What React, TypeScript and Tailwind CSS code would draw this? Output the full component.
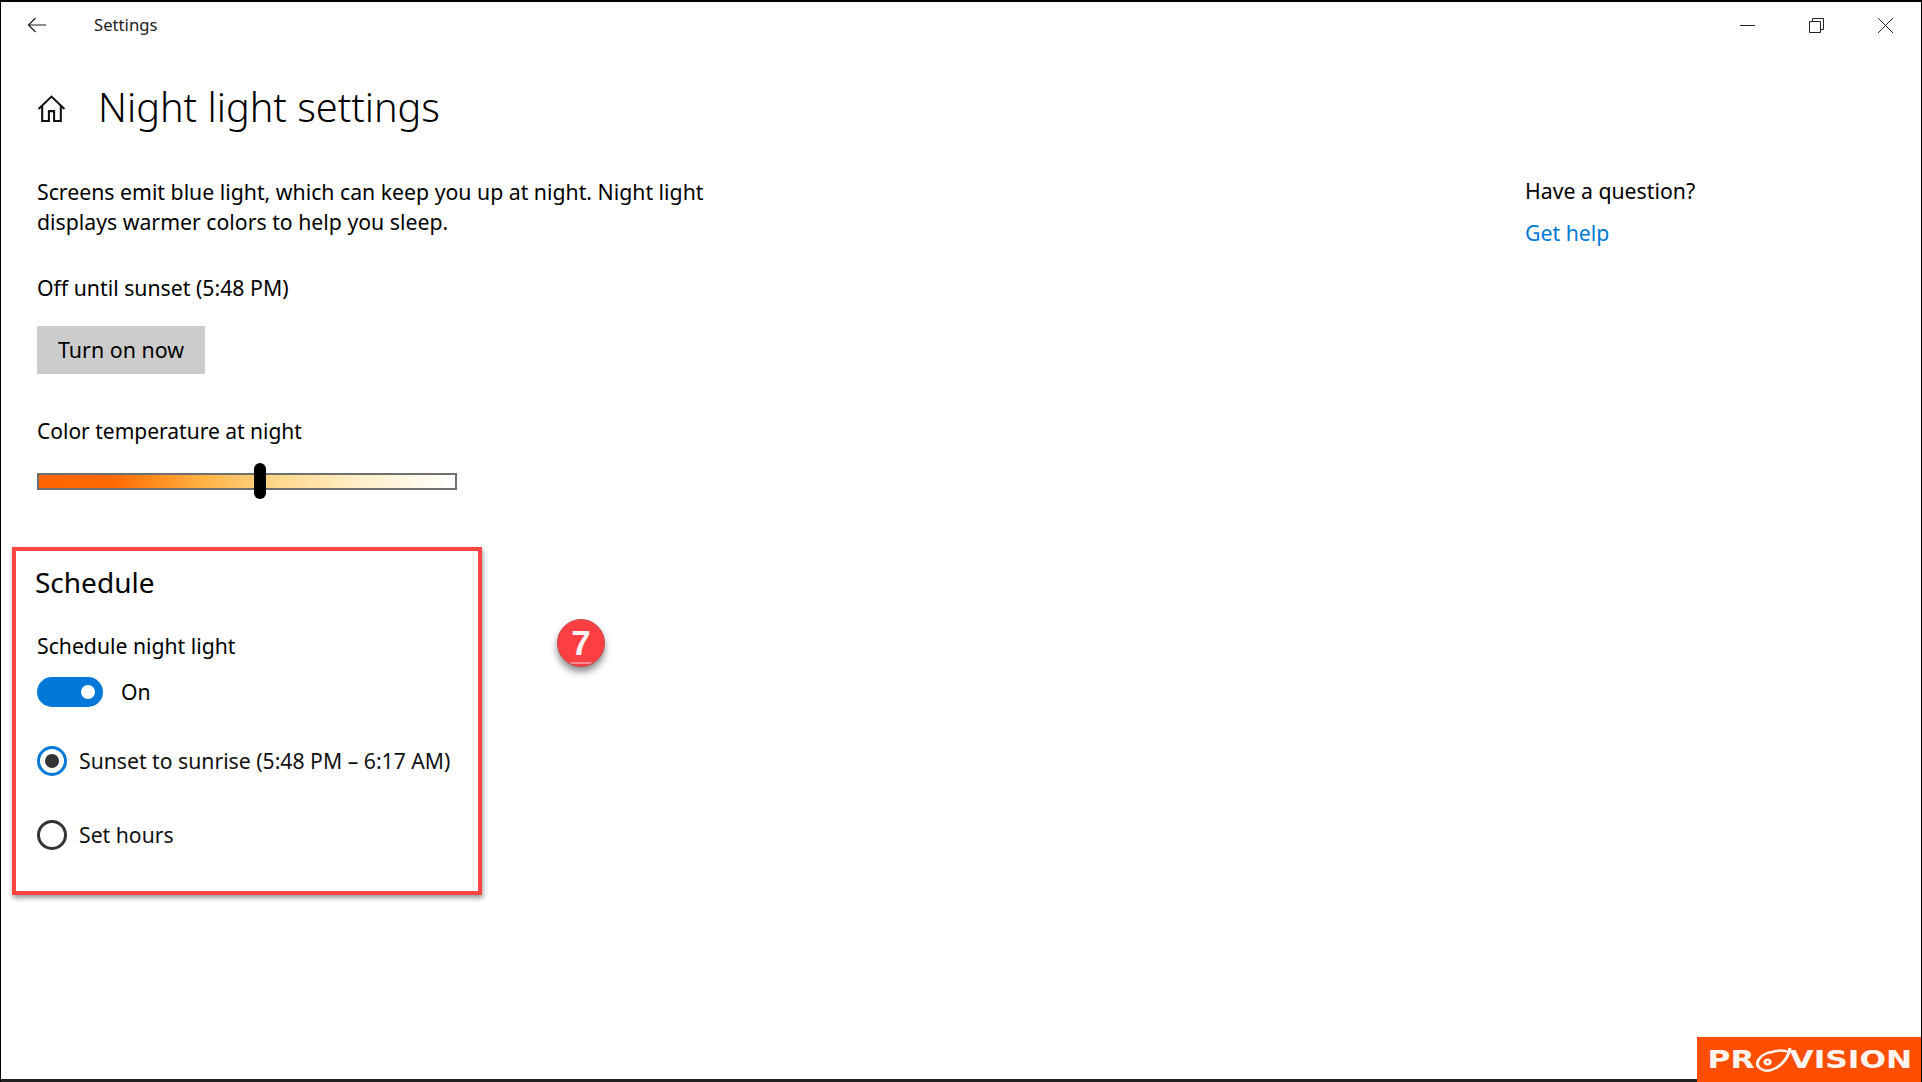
import React from 'react';

const FONT = "font-['Noto_Sans','Open_Sans',sans-serif]";

function BackArrow() {
  return (
    <svg width="20" height="16" viewBox="0 0 20 16" fill="none" stroke="#1a1a1a" strokeWidth="1.2">
      <path d="M19 8H1.5M8.5 1L1.5 8l7 7" />
    </svg>
  );
}

function HomeIcon() {
  return (
    <svg width="29" height="29" viewBox="0 0 28 28" fill="none" stroke="#111" strokeWidth="2">
      <path d="M1.5 14.5L14 2.5l12.5 12" />
      <path d="M5 11.5V26h6.5v-9.5h5V26H23V11.5" />
    </svg>
  );
}

function WindowButtons() {
  return (
    <div className="flex items-center gap-[54px] pr-[28px]">
      <svg width="15" height="15" viewBox="0 0 15 15" stroke="#222" strokeWidth="1">
        <path d="M0 7.5h15" />
      </svg>
      <svg width="15" height="15" viewBox="0 0 15 15" fill="none" stroke="#222" strokeWidth="1">
        <path d="M.5 3.5h11v11H.5z" />
        <path d="M3.5 3.5V.5h11v11h-3" />
      </svg>
      <svg width="15" height="15" viewBox="0 0 15 15" stroke="#222" strokeWidth="1">
        <path d="M0 0l15 15M15 0L0 15" />
      </svg>
    </div>
  );
}

function Radio({ checked, label }: { checked?: boolean; label: string }) {
  return (
    <div className="flex items-center gap-[12px] h-[30px]">
      <span
        className={`w-[30px] h-[30px] rounded-full border-[3px] flex items-center justify-center ${
          checked ? 'border-[#0078d7]' : 'border-[#333333]'
        }`}
      >
        {checked && <span className="w-[14px] h-[14px] rounded-full bg-[#333333]" />}
      </span>
      <span className="text-[21.2px] text-[#111]">{label}</span>
    </div>
  );
}

export default function App() {
  return (
    <div className={`${FONT} relative h-[1082px] w-[1922px] overflow-hidden bg-white border-t-2 border-x border-black text-black`}>
      {/* title bar */}
      <div className="flex items-center justify-between h-[46px]">
        <div className="flex items-center">
          <div className="ml-[26px] w-[67px]">
            <BackArrow />
          </div>
          <span className="text-[16.7px] text-[#222]">Settings</span>
        </div>
        <WindowButtons />
      </div>

      <div className="flex justify-between pl-[36px]">
        <div className="flex flex-col items-start">
          <div className="flex items-center h-[80px] mt-[20px]">
            <HomeIcon />
            <h1 className="ml-[32px] text-[39.7px] font-light leading-none">Night light settings</h1>
          </div>

          <p className="mt-[29px] w-[730px] text-[21.25px] leading-[30px]">
            Screens emit blue light, which can keep you up at night. Night light displays warmer colors to help you sleep.
          </p>
          <p className="mt-[36px] text-[21.25px] leading-[30px]">Off until sunset (5:48 PM)</p>

          <button className="mt-[23px] h-[48px] w-[168px] bg-[#cccccc] pt-[1px] text-[21.4px]">Turn on now</button>

          <p className="mt-[42px] text-[21px] leading-[30px]">Color temperature at night</p>

          <div className="relative mt-[27px] h-[17px] w-[420px] border-2 border-[#6f6f6f] bg-[linear-gradient(to_right,#ff6400_0%,#ff6a00_18%,#ffb445_40%,#ffd98e_58%,#fff0cc_78%,#ffffff_100%)]">
            <span className="absolute left-[215px] top-[-12px] h-[36px] w-[12px] rounded-full bg-black" />
          </div>

          <div className="mt-[74px]">
            <h2 className="ml-[-2px] text-[28px] font-normal leading-[36px]">Schedule</h2>
            <p className="mt-[31px] text-[21.2px] leading-[30px]">Schedule night light</p>
            <div className="mt-[15px] flex items-center gap-[18px]">
              <span className="flex h-[30px] w-[66px] items-center justify-end rounded-full bg-[#0078d7] pr-[8px]">
                <span className="h-[14px] w-[14px] rounded-full bg-white" />
              </span>
              <span className="text-[21.2px]">On</span>
            </div>
            <div className="mt-[38px] flex flex-col gap-[44px]">
              <Radio checked label="Sunset to sunrise (5:48 PM – 6:17 AM)" />
              <Radio label="Set hours" />
            </div>
          </div>
        </div>

        <div className="w-[396px] mt-[128px]">
          <p className="text-[21.25px] leading-[30px]">Have a question?</p>
          <a className="mt-[12px] block text-[21.25px] leading-[30px] text-[#0078d7]">Get help</a>
        </div>
      </div>

      {/* annotation box */}
      <div className="absolute left-[11px] top-[545px] h-[348px] w-[470px] border-4 border-[#ff4444] shadow-[1px_3px_5px_rgba(0,0,0,0.4)]" />

      {/* step badge */}
      <div className="absolute left-[556px] top-[617px] flex h-[48px] w-[48px] items-center justify-center overflow-hidden rounded-full border border-[#c9474a] bg-[#fb3f43] shadow-[0_5px_7px_rgba(0,0,0,0.45)] font-['Liberation_Sans',sans-serif] text-[35px] font-bold text-[#fdf3f3]">
        7
        <span className="absolute bottom-[2px] left-[12px] right-[12px] h-[2px] rounded-b-full bg-[#ff8c8e]" />
      </div>

      {/* watermark */}
      <div className="absolute bottom-0 right-[-1px] z-10 flex h-[45px] w-[225px] items-center justify-center overflow-hidden bg-[#ff4e00] font-['DejaVu_Sans',sans-serif] text-[25px] font-bold text-[#fff5ee]">
        <span className="flex scale-x-[1.25] items-center">
          <span>PR</span>
          <svg width="34" height="30" viewBox="0 0 34 30" fill="none" stroke="#fff5ee" strokeWidth="2.4" className="mx-[-3px]">
            <path d="M8 24C2 20 5 11 15 7" />
            <path d="M31 3c-1 9-7 19-15 22-3 1-6 1-8-1" />
            <path d="M14 8c6-3 12-3 16-1" />
            <circle cx="13" cy="17" r="2.2" />
          </svg>
          <span>VISION</span>
        </span>
      </div>

      {/* bottom edge */}
      <div className="absolute bottom-0 left-[-1px] right-[-1px] h-[3px] bg-[#222]" />
    </div>
  );
}
